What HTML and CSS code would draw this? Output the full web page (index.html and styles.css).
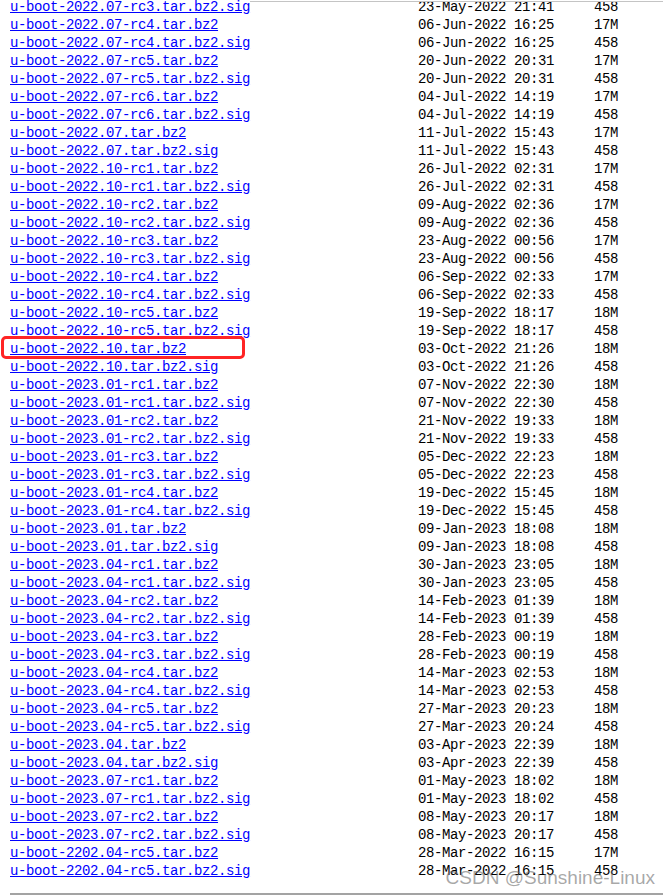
FILE: index.html
```html
<!DOCTYPE html>
<html lang="en">
<head>
    <meta charset="UTF-8">
    <title>Index of /pub/u-boot</title>
    <link rel="stylesheet" href="styles.css">
</head>
<body>
    <div class="topline"></div>
<pre class="listing"><a href="#">u-boot-2022.07-rc3.tar.bz2.sig</a>                     23-May-2022 21:41     458
<a href="#">u-boot-2022.07-rc4.tar.bz2</a>                         06-Jun-2022 16:25     17M
<a href="#">u-boot-2022.07-rc4.tar.bz2.sig</a>                     06-Jun-2022 16:25     458
<a href="#">u-boot-2022.07-rc5.tar.bz2</a>                         20-Jun-2022 20:31     17M
<a href="#">u-boot-2022.07-rc5.tar.bz2.sig</a>                     20-Jun-2022 20:31     458
<a href="#">u-boot-2022.07-rc6.tar.bz2</a>                         04-Jul-2022 14:19     17M
<a href="#">u-boot-2022.07-rc6.tar.bz2.sig</a>                     04-Jul-2022 14:19     458
<a href="#">u-boot-2022.07.tar.bz2</a>                             11-Jul-2022 15:43     17M
<a href="#">u-boot-2022.07.tar.bz2.sig</a>                         11-Jul-2022 15:43     458
<a href="#">u-boot-2022.10-rc1.tar.bz2</a>                         26-Jul-2022 02:31     17M
<a href="#">u-boot-2022.10-rc1.tar.bz2.sig</a>                     26-Jul-2022 02:31     458
<a href="#">u-boot-2022.10-rc2.tar.bz2</a>                         09-Aug-2022 02:36     17M
<a href="#">u-boot-2022.10-rc2.tar.bz2.sig</a>                     09-Aug-2022 02:36     458
<a href="#">u-boot-2022.10-rc3.tar.bz2</a>                         23-Aug-2022 00:56     17M
<a href="#">u-boot-2022.10-rc3.tar.bz2.sig</a>                     23-Aug-2022 00:56     458
<a href="#">u-boot-2022.10-rc4.tar.bz2</a>                         06-Sep-2022 02:33     17M
<a href="#">u-boot-2022.10-rc4.tar.bz2.sig</a>                     06-Sep-2022 02:33     458
<a href="#">u-boot-2022.10-rc5.tar.bz2</a>                         19-Sep-2022 18:17     18M
<a href="#">u-boot-2022.10-rc5.tar.bz2.sig</a>                     19-Sep-2022 18:17     458
<a href="#">u-boot-2022.10.tar.bz2</a>                             03-Oct-2022 21:26     18M
<a href="#">u-boot-2022.10.tar.bz2.sig</a>                         03-Oct-2022 21:26     458
<a href="#">u-boot-2023.01-rc1.tar.bz2</a>                         07-Nov-2022 22:30     18M
<a href="#">u-boot-2023.01-rc1.tar.bz2.sig</a>                     07-Nov-2022 22:30     458
<a href="#">u-boot-2023.01-rc2.tar.bz2</a>                         21-Nov-2022 19:33     18M
<a href="#">u-boot-2023.01-rc2.tar.bz2.sig</a>                     21-Nov-2022 19:33     458
<a href="#">u-boot-2023.01-rc3.tar.bz2</a>                         05-Dec-2022 22:23     18M
<a href="#">u-boot-2023.01-rc3.tar.bz2.sig</a>                     05-Dec-2022 22:23     458
<a href="#">u-boot-2023.01-rc4.tar.bz2</a>                         19-Dec-2022 15:45     18M
<a href="#">u-boot-2023.01-rc4.tar.bz2.sig</a>                     19-Dec-2022 15:45     458
<a href="#">u-boot-2023.01.tar.bz2</a>                             09-Jan-2023 18:08     18M
<a href="#">u-boot-2023.01.tar.bz2.sig</a>                         09-Jan-2023 18:08     458
<a href="#">u-boot-2023.04-rc1.tar.bz2</a>                         30-Jan-2023 23:05     18M
<a href="#">u-boot-2023.04-rc1.tar.bz2.sig</a>                     30-Jan-2023 23:05     458
<a href="#">u-boot-2023.04-rc2.tar.bz2</a>                         14-Feb-2023 01:39     18M
<a href="#">u-boot-2023.04-rc2.tar.bz2.sig</a>                     14-Feb-2023 01:39     458
<a href="#">u-boot-2023.04-rc3.tar.bz2</a>                         28-Feb-2023 00:19     18M
<a href="#">u-boot-2023.04-rc3.tar.bz2.sig</a>                     28-Feb-2023 00:19     458
<a href="#">u-boot-2023.04-rc4.tar.bz2</a>                         14-Mar-2023 02:53     18M
<a href="#">u-boot-2023.04-rc4.tar.bz2.sig</a>                     14-Mar-2023 02:53     458
<a href="#">u-boot-2023.04-rc5.tar.bz2</a>                         27-Mar-2023 20:23     18M
<a href="#">u-boot-2023.04-rc5.tar.bz2.sig</a>                     27-Mar-2023 20:24     458
<a href="#">u-boot-2023.04.tar.bz2</a>                             03-Apr-2023 22:39     18M
<a href="#">u-boot-2023.04.tar.bz2.sig</a>                         03-Apr-2023 22:39     458
<a href="#">u-boot-2023.07-rc1.tar.bz2</a>                         01-May-2023 18:02     18M
<a href="#">u-boot-2023.07-rc1.tar.bz2.sig</a>                     01-May-2023 18:02     458
<a href="#">u-boot-2023.07-rc2.tar.bz2</a>                         08-May-2023 20:17     18M
<a href="#">u-boot-2023.07-rc2.tar.bz2.sig</a>                     08-May-2023 20:17     458
<a href="#">u-boot-2202.04-rc5.tar.bz2</a>                         28-Mar-2022 16:15     17M
<a href="#">u-boot-2202.04-rc5.tar.bz2.sig</a>                     28-Mar-2022 16:15     458
</pre>
    <div class="rule"></div>

    <!-- marca roja sobre la fila 2022.10 -->
    <div class="highlight"></div>
    <div class="watermark">CSDN @Sunshine-Linux</div>
</body>
</html>
```

FILE: styles.css
```css
html, body {
    margin: 0;
    padding: 0;
    background: #FFFFFF;
    overflow: hidden;
}
body {
    padding-left: 10px;
    height: 895px;
    position: relative;
}
.listing {
    margin: -2px 0 0 0;
    font-family: "Liberation Mono", "DejaVu Sans Mono", monospace;
    font-size: 14px;
    letter-spacing: -0.4px;
    line-height: 18px;
    color: #000000;
}
.listing a {
    color: #0000FF;
    text-decoration: underline;
}
.rule {
    margin-top: 13px;
    height: 2px;
    background: #A3A3A3;
}
.topline {
    position: absolute;
    top: 1px;
    left: 250px;
    right: 0;
    height: 1px;
    background: #C4C4C4;
}
/* recuadro de resaltado */
.highlight {
    position: absolute;
    left: 1px;
    top: 336px;
    width: 244px;
    height: 23px;
    box-sizing: border-box;
    border: 3.5px solid #FF2424;
    border-radius: 5px;
}
.watermark {
    position: absolute;
    right: 8px;
    top: 867px;
    font-family: "Liberation Sans", Arial, sans-serif;
    font-size: 19px;
    color: rgba(110, 110, 110, 0.6);
    white-space: nowrap;
}
```
